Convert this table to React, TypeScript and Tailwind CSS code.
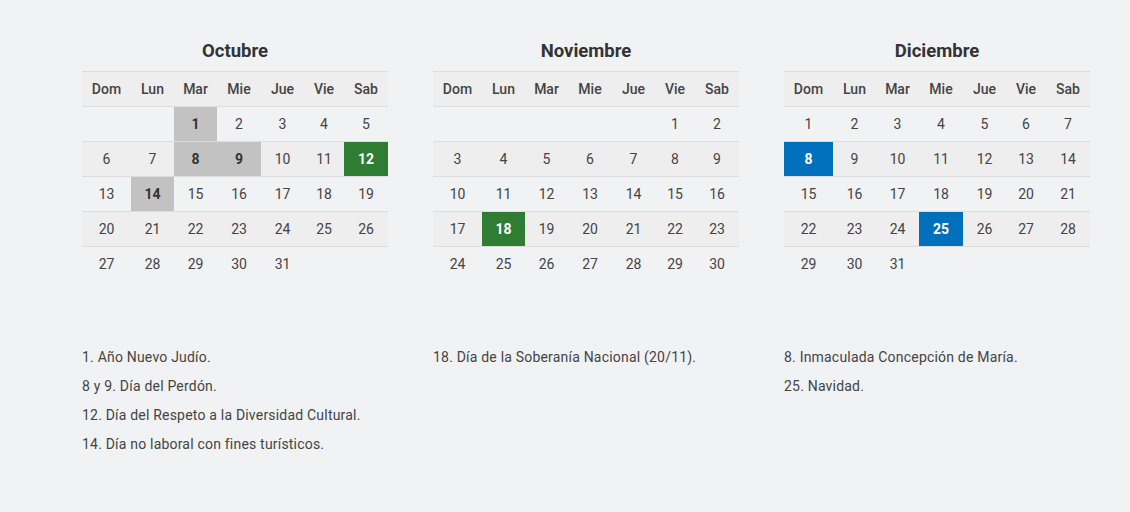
import React from "react";

type Mark = "gray" | "green" | "blue";

type Month = {
  name: string;
  offset: number;
  days: number;
  marks: Record<number, Mark>;
  notes: string[];
};

const months: Month[] = [
  {
    name: "Octubre",
    offset: 2,
    days: 31,
    marks: { 1: "gray", 8: "gray", 9: "gray", 12: "green", 14: "gray" },
    notes: [
      "1. Año Nuevo Judío.",
      "8 y 9. Día del Perdón.",
      "12. Día del Respeto a la Diversidad Cultural.",
      "14. Día no laboral con fines turísticos.",
    ],
  },
  {
    name: "Noviembre",
    offset: 5,
    days: 30,
    marks: { 18: "green" },
    notes: ["18. Día de la Soberanía Nacional (20/11)."],
  },
  {
    name: "Diciembre",
    offset: 0,
    days: 31,
    marks: { 8: "blue", 25: "blue" },
    notes: ["8. Inmaculada Concepción de María.", "25. Navidad."],
  },
];

const weekDays = ["Dom", "Lun", "Mar", "Mie", "Jue", "Vie", "Sab"];

const markClass: Record<Mark, string> = {
  gray: "bg-[#c2c2c2] text-[#333] font-bold",
  green: "bg-[#2e7d32] text-white font-bold",
  blue: "bg-[#0070bd] text-white font-bold",
};

function MonthTable({ month }: { month: Month }) {
  const cells: (number | null)[] = [];
  for (let i = 0; i < month.offset; i++) cells.push(null);
  for (let d = 1; d <= month.days; d++) cells.push(d);
  while (cells.length % 7 !== 0) cells.push(null);
  const rows: (number | null)[][] = [];
  for (let i = 0; i < cells.length; i += 7) rows.push(cells.slice(i, i + 7));

  return (
    <div className="w-[306px]">
      <h2 className="text-center text-[18.5px] leading-[24px] font-bold text-[#333] pt-px mb-[8px]">
        {month.name}
      </h2>
      <div className="grid grid-cols-[49px_43px_43px_44px_43px_40px_44px] border-t border-[#dddddd] bg-[#eeeeee] h-[35px]">
        {weekDays.map((w) => (
          <div key={w} className="flex items-center justify-center text-[14px] font-medium text-[#444]">
            {w}
          </div>
        ))}
      </div>
      {rows.map((row, ri) => (
        <div
          key={ri}
          className={`grid grid-cols-[49px_43px_43px_44px_43px_40px_44px] h-[35px] border-t border-[#dddddd] ${
            ri % 2 === 1 ? "bg-[#eeeeee]" : ""
          }`}
        >
          {row.map((d, ci) => {
            const mark = d ? month.marks[d] : undefined;
            return (
              <div
                key={ci}
                className={`flex items-center justify-center text-[14px] ${
                  mark ? markClass[mark] : "text-[#444]"
                }`}
              >
                {d ?? ""}
              </div>
            );
          })}
        </div>
      ))}
    </div>
  );
}

export default function App() {
  return (
    <div
      className="min-h-[512px] w-full bg-[#f1f2f4] pt-[38px] pl-[82px]"
      style={{ fontFamily: "Roboto, 'Liberation Sans', sans-serif" }}
    >
      <div className="flex gap-[45px]">
        {months.map((m) => (
          <MonthTable key={m.name} month={m} />
        ))}
      </div>
      <div className="flex gap-[45px] mt-[62px]">
        {months.map((m) => (
          <ul key={m.name} className="w-[306px]">
            {m.notes.map((n) => (
              <li key={n} className="text-[14px] tracking-[0.2px] leading-[29px] text-[#444]">
                {n}
              </li>
            ))}
          </ul>
        ))}
      </div>
    </div>
  );
}
